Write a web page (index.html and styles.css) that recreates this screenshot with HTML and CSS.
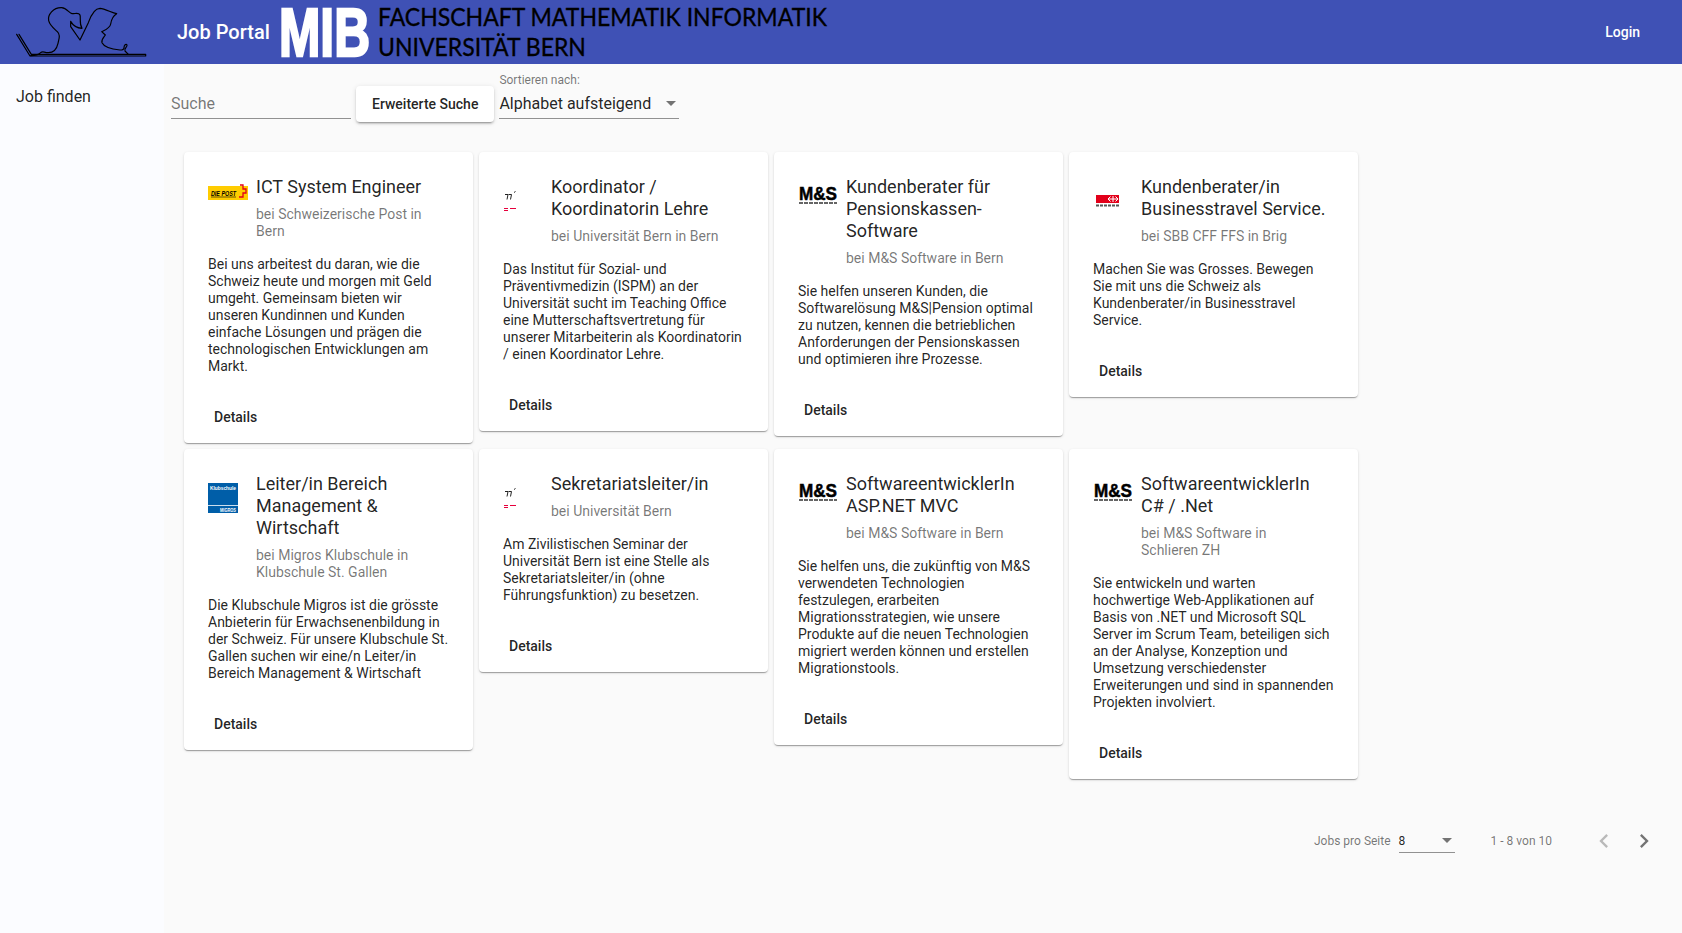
FILE: index.html
```html
<!DOCTYPE html>
<html lang="de">
<head>
<meta charset="utf-8">
<title>Job Portal</title>
<link rel="stylesheet" href="styles.css">
</head>
<body>
<header class="toolbar">
  <svg class="silhouette" width="160" height="64" viewBox="0 0 480 192" fill="none" stroke="#000" stroke-width="3.600" stroke-linejoin="round" stroke-linecap="round">
    <path d="M50 103L90 168H437M57 103L94 163H375L437 163V168"/>
    <path d="M92 167C105 167 115 165 122 158C128 152 132 158 145 158C160 158 170 148 174 130C177 115 182 105 172 95C165 88 150 78 146 62C142 45 160 22 185 23C200 24 208 40 216 41C225 42 236 36 240 45C243 55 237 70 246 85C232 84 220 78 212 64V80L240 120L265 68C272 48 285 25 300 25C315 26 335 38 350 41C338 48 334 58 332 72C330 85 315 90 305 95L316 105C312 112 303 118 306 128C312 140 332 147 360 150C367 150 372 148 372 143C372 135 378 130 381 135C383 140 371 146 375 153L385 163"/>
  </svg>
  <span class="portal">Job Portal</span>
  <div class="mib"><span class="mib-text">MIB</span></div>
  <div class="faculty">
    <span class="faculty-line">FACHSCHAFT MATHEMATIK INFORMATIK</span>
    <span class="faculty-line">UNIVERSITÄT BERN</span>
  </div>
  <a class="login">Login</a>
</header>
<div class="layout">
  <nav class="sidebar"><a class="nav-item">Job finden</a></nav>
  <main class="content">
    <div class="filters">
      <div class="field search"><span class="placeholder">Suche</span></div>
      <button class="raised">Erweiterte Suche</button>
      <div class="sort">
        <span class="sort-label">Sortieren nach:</span>
        <div class="field select"><span>Alphabet aufsteigend</span><i class="arrow"></i></div>
      </div>
    </div>
    <div class="grid">
      <article class="card">
        <div class="card-head">
          <svg class="logo" width="40" height="40" viewBox="0 0 40 40"><rect y="10" width="40" height="14" fill="#fc0"/><text x="3" y="19.500" textLength="25" lengthAdjust="spacingAndGlyphs" class="post-text">DIE POST</text><path d="M3 21h25" stroke="#000" stroke-width=".6"/><path d="M32 9h3v4h3v4h-3v4h-4" fill="none" stroke="#e2001a" stroke-width="1.300"/></svg>
          <div><h2>ICT System Engineer</h2><p class="sub">bei Schweizerische Post in Bern</p></div>
        </div>
        <p class="text">Bei uns arbeitest du daran, wie die Schweiz heute und morgen mit Geld umgeht. Gemeinsam bieten wir unseren Kundinnen und Kunden einfache Lösungen und prägen die technologischen Entwicklungen am Markt.</p>
        <a class="details">Details</a>
      </article>
      <article class="card">
        <div class="card-head">
          <svg class="logo" width="40" height="40" viewBox="0 0 40 40"><path d="M2 18.500h3l-1 5M5.500 18.500h3l-1 5M11 16.500l1.500-1" fill="none" stroke="#222" stroke-width="1"/><path d="M1 32.500h4M1 34.500h4M7 32.500h6" stroke="#e6003c" stroke-width="1"/></svg>
          <div><h2>Koordinator / Koordinatorin Lehre</h2><p class="sub">bei Universität Bern in Bern</p></div>
        </div>
        <p class="text">Das Institut für Sozial- und Präventivmedizin (ISPM) an der Universität sucht im Teaching Office eine Mutterschaftsvertretung für unserer Mitarbeiterin als Koordinatorin / einen Koordinator Lehre.</p>
        <a class="details">Details</a>
      </article>
      <article class="card">
        <div class="card-head">
          <svg class="logo" width="40" height="40" viewBox="0 0 40 40"><text x="1" y="24" textLength="38" lengthAdjust="spacingAndGlyphs" class="ms-text">M&amp;S</text><path d="M1 27h38" stroke="#333" stroke-width="1.500" stroke-dasharray="4 1"/></svg>
          <div><h2>Kundenberater für Pensionskassen-Software</h2><p class="sub">bei M&amp;S Software in Bern</p></div>
        </div>
        <p class="text">Sie helfen unseren Kunden, die Softwarelösung M&amp;S|Pension optimal zu nutzen, kennen die betrieblichen Anforderungen der Pensionskassen und optimieren ihre Prozesse.</p>
        <a class="details">Details</a>
      </article>
      <article class="card">
        <div class="card-head">
          <svg class="logo" width="40" height="40" viewBox="0 0 40 40"><rect x="3" y="19" width="23" height="8" fill="#e2001a"/><path d="M15 23h10M17.500 20.500L15 23l2.500 2.500M22.500 20.500L25 23l-2.500 2.500M20 20v6" fill="none" stroke="#fff" stroke-width="1"/><path d="M3 29.500h23" stroke="#555" stroke-width="2" stroke-dasharray="3 1"/></svg>
          <div><h2>Kundenberater/in Businesstravel Service.</h2><p class="sub">bei SBB CFF FFS in Brig</p></div>
        </div>
        <p class="text">Machen Sie was Grosses. Bewegen Sie mit uns die Schweiz als Kundenberater/in Businesstravel Service.</p>
        <a class="details">Details</a>
      </article>
      <article class="card">
        <div class="card-head">
          <svg class="logo" width="40" height="40" viewBox="0 0 40 40"><rect y="10" width="30" height="30" fill="#005ea8"/><text x="2" y="16.500" textLength="26" lengthAdjust="spacingAndGlyphs" class="klub-text">Klubschule</text><text x="12" y="38.500" textLength="16" lengthAdjust="spacingAndGlyphs" class="klub-text">MIGROS</text><path d="M0 32.500h30" stroke="#fff" stroke-width=".8"/></svg>
          <div><h2>Leiter/in Bereich Management &amp; Wirtschaft</h2><p class="sub">bei Migros Klubschule in Klubschule St. Gallen</p></div>
        </div>
        <p class="text">Die Klubschule Migros ist die grösste Anbieterin für Erwachsenenbildung in der Schweiz. Für unsere Klubschule St. Gallen suchen wir eine/n Leiter/in Bereich Management &amp; Wirtschaft</p>
        <a class="details">Details</a>
      </article>
      <article class="card">
        <div class="card-head">
          <svg class="logo" width="40" height="40" viewBox="0 0 40 40"><path d="M2 18.500h3l-1 5M5.500 18.500h3l-1 5M11 16.500l1.500-1" fill="none" stroke="#222" stroke-width="1"/><path d="M1 32.500h4M1 34.500h4M7 32.500h6" stroke="#e6003c" stroke-width="1"/></svg>
          <div><h2>Sekretariatsleiter/in</h2><p class="sub">bei Universität Bern</p></div>
        </div>
        <p class="text">Am Zivilistischen Seminar der Universität Bern ist eine Stelle als Sekretariatsleiter/in (ohne Führungsfunktion) zu besetzen.</p>
        <a class="details">Details</a>
      </article>
      <article class="card">
        <div class="card-head">
          <svg class="logo" width="40" height="40" viewBox="0 0 40 40"><text x="1" y="24" textLength="38" lengthAdjust="spacingAndGlyphs" class="ms-text">M&amp;S</text><path d="M1 27h38" stroke="#333" stroke-width="1.500" stroke-dasharray="4 1"/></svg>
          <div><h2>SoftwareentwicklerIn ASP.NET MVC</h2><p class="sub">bei M&amp;S Software in Bern</p></div>
        </div>
        <p class="text">Sie helfen uns, die zukünftig von M&amp;S verwendeten Technologien festzulegen, erarbeiten Migrationsstrategien, wie unsere Produkte auf die neuen Technologien migriert werden können und erstellen Migrationstools.</p>
        <a class="details">Details</a>
      </article>
      <article class="card">
        <div class="card-head">
          <svg class="logo" width="40" height="40" viewBox="0 0 40 40"><text x="1" y="24" textLength="38" lengthAdjust="spacingAndGlyphs" class="ms-text">M&amp;S</text><path d="M1 27h38" stroke="#333" stroke-width="1.500" stroke-dasharray="4 1"/></svg>
          <div><h2>SoftwareentwicklerIn C# / .Net</h2><p class="sub">bei M&amp;S Software in Schlieren ZH</p></div>
        </div>
        <p class="text">Sie entwickeln und warten hochwertige Web-Applikationen auf Basis von .NET und Microsoft SQL Server im Scrum Team, beteiligen sich an der Analyse, Konzeption und Umsetzung verschiedenster Erweiterungen und sind in spannenden Projekten involviert.</p>
        <a class="details">Details</a>
      </article>
    </div>
    <div class="paginator">
      <span class="per-page">Jobs pro Seite</span>
      <div class="page-select"><span>8</span><i class="arrow"></i></div>
      <span class="range">1 - 8 von 10</span>
      <svg class="chev disabled" width="28" height="28" viewBox="0 0 24 24"><path d="M15.410 7.410L14 6l-6 6 6 6 1.410-1.410L10.830 12z"/></svg>
      <svg class="chev" width="28" height="28" viewBox="0 0 24 24"><path d="M10 6L8.590 7.410 13.170 12l-4.580 4.590L10 18l6-6z"/></svg>
    </div>
  </main>
</div>
</body>
</html>
```
FILE: styles.css
```css
* { box-sizing: border-box; }
html, body { height: 100%; }
body {
  margin: 0;
  background: #fafafa;
  font-family: Roboto, sans-serif;
  font-size: 14px;
  color: rgba(0, 0, 0, .87);
  overflow: hidden;
}
.toolbar {
  height: 64px;
  background: #3f51b5;
  display: flex;
  align-items: center;
  color: #fff;
}
.silhouette { flex: none; margin-right: 17px; }
.portal { font-size: 20px; font-weight: 500; margin-right: 9px; white-space: nowrap; }
.mib { flex: none; width: 126px; height: 64px; margin-right: -27px; }
.mib-text {
  display: block;
  font: 700 68px/64px "Liberation Sans", sans-serif;
  color: #fff;
  -webkit-text-stroke: 2.5px #fff;
  transform: scaleX(.73);
  transform-origin: left center;
}
.faculty { display: flex; flex-direction: column; margin: -2px 0 0 0; color: #000; font-family: Lato, sans-serif; font-size: 25px; line-height: 30px; white-space: nowrap; -webkit-text-stroke: .35px #000; }
.faculty-line { display: block; transform: scaleX(.92); transform-origin: left center; }
.login { margin-left: auto; margin-right: 42px; font-weight: 500; }
.layout { display: flex; height: 869px; }
.sidebar { width: 164px; flex: none; background: #fbfcff; padding: 23px 16px; }
.nav-item { font-size: 16px; line-height: 20px; }
.content { flex: 1; min-width: 0; display: flex; flex-direction: column; padding: 0 0 0 7px; }
.filters { display: flex; align-items: flex-end; height: 55px; }
.field { border-bottom: 1px solid rgba(0, 0, 0, .42); height: 32px; width: 180px; font-size: 16px; line-height: 33px; }
.search { line-height: 34px; }
.placeholder { color: rgba(0, 0, 0, .54); }
.raised {
  border: 0; background: #fff; height: 36px; padding: 0 16px; margin: 0 5px -3px 5px;
  border-radius: 4px; font: 500 14px Roboto, sans-serif; color: rgba(0, 0, 0, .87);
  box-shadow: 0 3px 1px -2px rgba(0,0,0,.2), 0 2px 2px 0 rgba(0,0,0,.14), 0 1px 5px 0 rgba(0,0,0,.12);
}
.sort { display: flex; flex-direction: column; width: 180px; }
.sort-label { font-size: 12px; line-height: 14px; color: rgba(0, 0, 0, .54); }
.select { display: flex; align-items: center; justify-content: space-between; padding: 2px 3px 0 0; }
.arrow { display: block; width: 0; height: 0; border: 5px solid transparent; border-top-color: rgba(0, 0, 0, .54); border-bottom: 0; }
.grid {
  display: grid;
  grid-template-columns: repeat(4, 289px);
  column-gap: 6px;
  row-gap: 6px;
  align-items: start;
  align-content: start;
  margin: 33px 0 0 13px;
}
.card {
  background: #fff;
  padding: 24px;
  border-radius: 4px;
  display: flex;
  flex-direction: column;
  box-shadow: 0 2px 1px -1px rgba(0,0,0,.2), 0 1px 1px 0 rgba(0,0,0,.14), 0 1px 3px 0 rgba(0,0,0,.12);
}
.card-head { display: flex; margin-bottom: 16px; }
.logo { flex: none; margin-right: 8px; }
.post-text { font: italic 700 7px "Liberation Sans", sans-serif; fill: #000; }
.ms-text { font: 700 18px "Liberation Sans", sans-serif; fill: #000; stroke: #000; stroke-width: .5; }
.klub-text { font: 700 5px "Liberation Sans", sans-serif; fill: #fff; }
h2 { margin: 0 0 8px; font-size: 18px; font-weight: 400; line-height: 22px; }
.sub { margin: 0; max-width: 180px; color: rgba(0, 0, 0, .54); line-height: 17px; }
.text { margin: 0 0 24px; line-height: 17px; }
.details { font-weight: 500; line-height: 36px; margin: 0 0 -16px 6px; }
.paginator { display: flex; align-items: center; height: 56px; margin-top: auto; margin-bottom: 64px; padding-left: 1143px; font-size: 12px; color: rgba(0, 0, 0, .54); }
.per-page { white-space: nowrap; }
.page-select { display: flex; align-items: center; justify-content: space-between; width: 56px; height: 24px; margin-left: 8px; border-bottom: 1px solid rgba(0,0,0,.42); padding-right: 3px; color: rgba(0,0,0,.87); }
.range { margin: 0 0 0 36px; white-space: nowrap; }
.chev { fill: rgba(0,0,0,.54); flex: none; margin-left: 12px; }
.chev.disabled { fill: rgba(0,0,0,.26); margin-left: 38px; }
```
